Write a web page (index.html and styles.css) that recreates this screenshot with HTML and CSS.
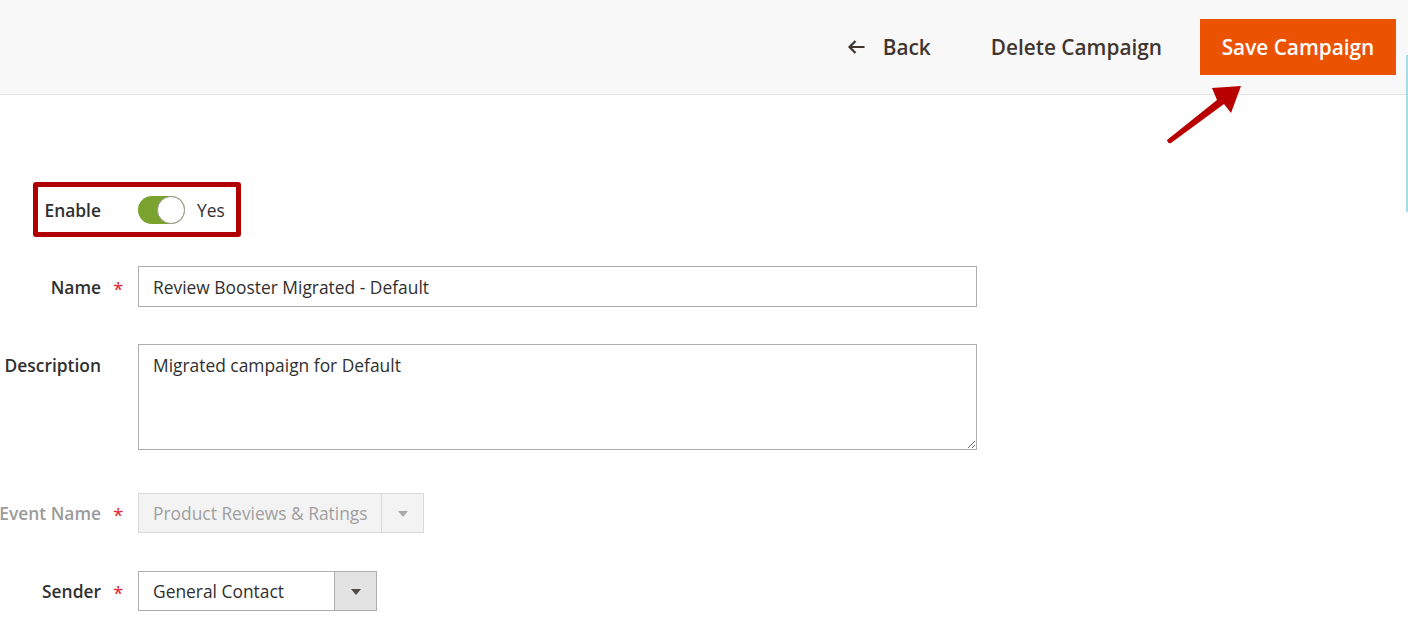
FILE: index.html
```html
<!DOCTYPE html>
<html>
<head>
<meta charset="utf-8">
<link rel="stylesheet" href="styles.css">
</head>
<body>
<header class="page-actions">
  <button class="action-back" type="button">
    <svg class="back-icon" width="18" height="14" viewBox="0 0 18 14"><path d="M17.5 7H2.5M8.5 1L2.5 7 8.5 13" fill="none" stroke="#41362f" stroke-width="2.2"/></svg>
    <span>Back</span>
  </button>
  <button class="action-delete" type="button">Delete Campaign</button>
  <button class="action-save" type="button">Save Campaign</button>
</header>
<svg class="callout-arrow" width="90" height="70" viewBox="0 0 90 70"><path d="M3 62 L53 22 L48 10 L77 8 L67 35 L60 26 L7 65 Q4 66 3 62 Z" fill="#b80000"/></svg>
<div class="scroll-marker"></div>

<main class="form">
  <div class="row row-enable">
    <div class="label">Enable</div>
    <div class="control">
      <span class="toggle"><span class="knob"></span></span>
      <span class="toggle-text">Yes</span>
    </div>
  </div>
  <div class="row row-name">
    <div class="label required">Name</div>
    <div class="control"><div class="input">Review Booster Migrated - Default</div></div>
  </div>
  <div class="row row-desc">
    <div class="label">Description</div>
    <div class="control"><textarea class="textarea">Migrated campaign for Default</textarea></div>
  </div>
  <div class="row row-event disabled">
    <div class="label required">Event Name</div>
    <div class="control">
      <div class="select select-disabled"><span class="select-value">Product Reviews &amp; Ratings</span><span class="select-arrow"></span></div>
    </div>
  </div>
  <div class="row row-sender">
    <div class="label required">Sender</div>
    <div class="control">
      <div class="select select-sender"><span class="select-value">General Contact</span><span class="select-arrow"></span></div>
    </div>
  </div>
</main>
</body>
</html>
```
FILE: styles.css
```css
*, *::before, *::after { box-sizing: border-box; }
html, body { margin: 0; padding: 0; }
body {
  font-family: "Open Sans", "Liberation Sans", sans-serif;
  color: #303030;
  background: #fff;
  width: 1408px;
  height: 617px;
  overflow: hidden;
  position: relative;
}
.page-actions {
  height: 95px;
  background: #f8f8f8;
  border-bottom: 1px solid #e3e3e3;
  display: flex;
  justify-content: flex-end;
  align-items: center;
  padding: 0 12px 0 0;
}
.page-actions button {
  font-family: "Open Sans", "Liberation Sans", sans-serif;
  font-weight: 600;
  font-size: 20.8px;
  border: 0;
  background: none;
  color: #41362f;
  cursor: pointer;
  padding: 0;
}
.action-back {
  display: flex;
  align-items: center;
  gap: 18px;
  margin-right: 60px;
}
.action-delete { margin-right: 38px; }
.action-save {
  width: 196px;
  height: 56px;
  margin-bottom: 1px;
  background: #eb5202 !important;
  color: #fff !important;
}
.callout-arrow {
  position: absolute;
  left: 1164px;
  top: 78px;
}
.scroll-marker {
  position: absolute;
  right: 0;
  top: 55px;
  width: 2px;
  height: 157px;
  background: #a8dcea;
}
.form { padding-top: 87px; }
.row {
  display: flex;
  align-items: center;
}
.label {
  width: 101px;
  flex: none;
  display: flex;
  justify-content: flex-end;
  white-space: nowrap;
  font-size: 17.4px;
  font-weight: 600;
  color: #303030;
  position: relative;
}
.required::after {
  content: "*";
  position: absolute;
  left: 113px;
  top: 1px;
  color: #e22626;
  font-weight: 400;
  font-size: 19px;
}
.control { margin-left: 37px; display: flex; align-items: center; }
.row-enable {
  position: relative;
  height: 55px;
}
.row-enable::before {
  content: "";
  position: absolute;
  left: 33px;
  top: 0;
  width: 208px;
  height: 55px;
  border: 5px solid #b00000;
  border-radius: 3px;
}
.toggle {
  width: 47px;
  height: 28px;
  border-radius: 14px;
  background: #79a22e;
  position: relative;
  display: inline-block;
}
.knob {
  position: absolute;
  right: 0;
  top: 0;
  width: 28px;
  height: 28px;
  border-radius: 50%;
  background: #fff;
  border: 1px solid #9a9a9a;
}
.toggle-text { margin-left: 12px; font-size: 17.4px; color: #303030; }
.row-name { margin-top: 29px; }
.input {
  width: 839px;
  height: 41px;
  border: 1px solid #adadad;
  font-size: 17.4px;
  padding: 0 14px;
  display: flex;
  align-items: center;
  color: #303030;
}
.row-desc { margin-top: 37px; align-items: flex-start; }
.row-desc .label { margin-top: 9px; }
.textarea {
  width: 839px;
  height: 106px;
  border: 1px solid #adadad;
  font-family: "Open Sans", "Liberation Sans", sans-serif;
  font-size: 17.4px;
  color: #303030;
  padding: 8px 14px;
  resize: vertical;
  margin: 0;
  display: block;
}
.row-event { margin-top: 43px; }
.disabled .label { color: #9b9b9b; }
.select {
  height: 40px;
  border: 1px solid #adadad;
  display: flex;
  align-items: stretch;
  font-size: 17.4px;
}
.select-value {
  display: flex;
  align-items: center;
  padding: 0 0 0 14px;
  flex: 1;
  white-space: nowrap;
  overflow: hidden;
}
.select-arrow {
  width: 42px;
  flex: none;
  border-left: 1px solid #adadad;
  background: #e3e3e3;
  position: relative;
}
.select-arrow::after {
  content: "";
  position: absolute;
  left: 50%;
  top: 50%;
  margin-left: -5px;
  margin-top: -2px;
  border-left: 5px solid transparent;
  border-right: 5px solid transparent;
  border-top: 6px solid #514943;
}
.select-disabled {
  width: 286px;
  background: #f3f3f3;
  border-color: #d9d9d9;
  color: #a0a0a0;
}
.select-disabled .select-arrow {
  background: #f3f3f3;
  border-left-color: #d9d9d9;
}
.select-disabled .select-arrow::after { border-top-color: #a9a9a9; }
.row-sender { margin-top: 38px; }
.select-sender { width: 239px; color: #303030; }
```
